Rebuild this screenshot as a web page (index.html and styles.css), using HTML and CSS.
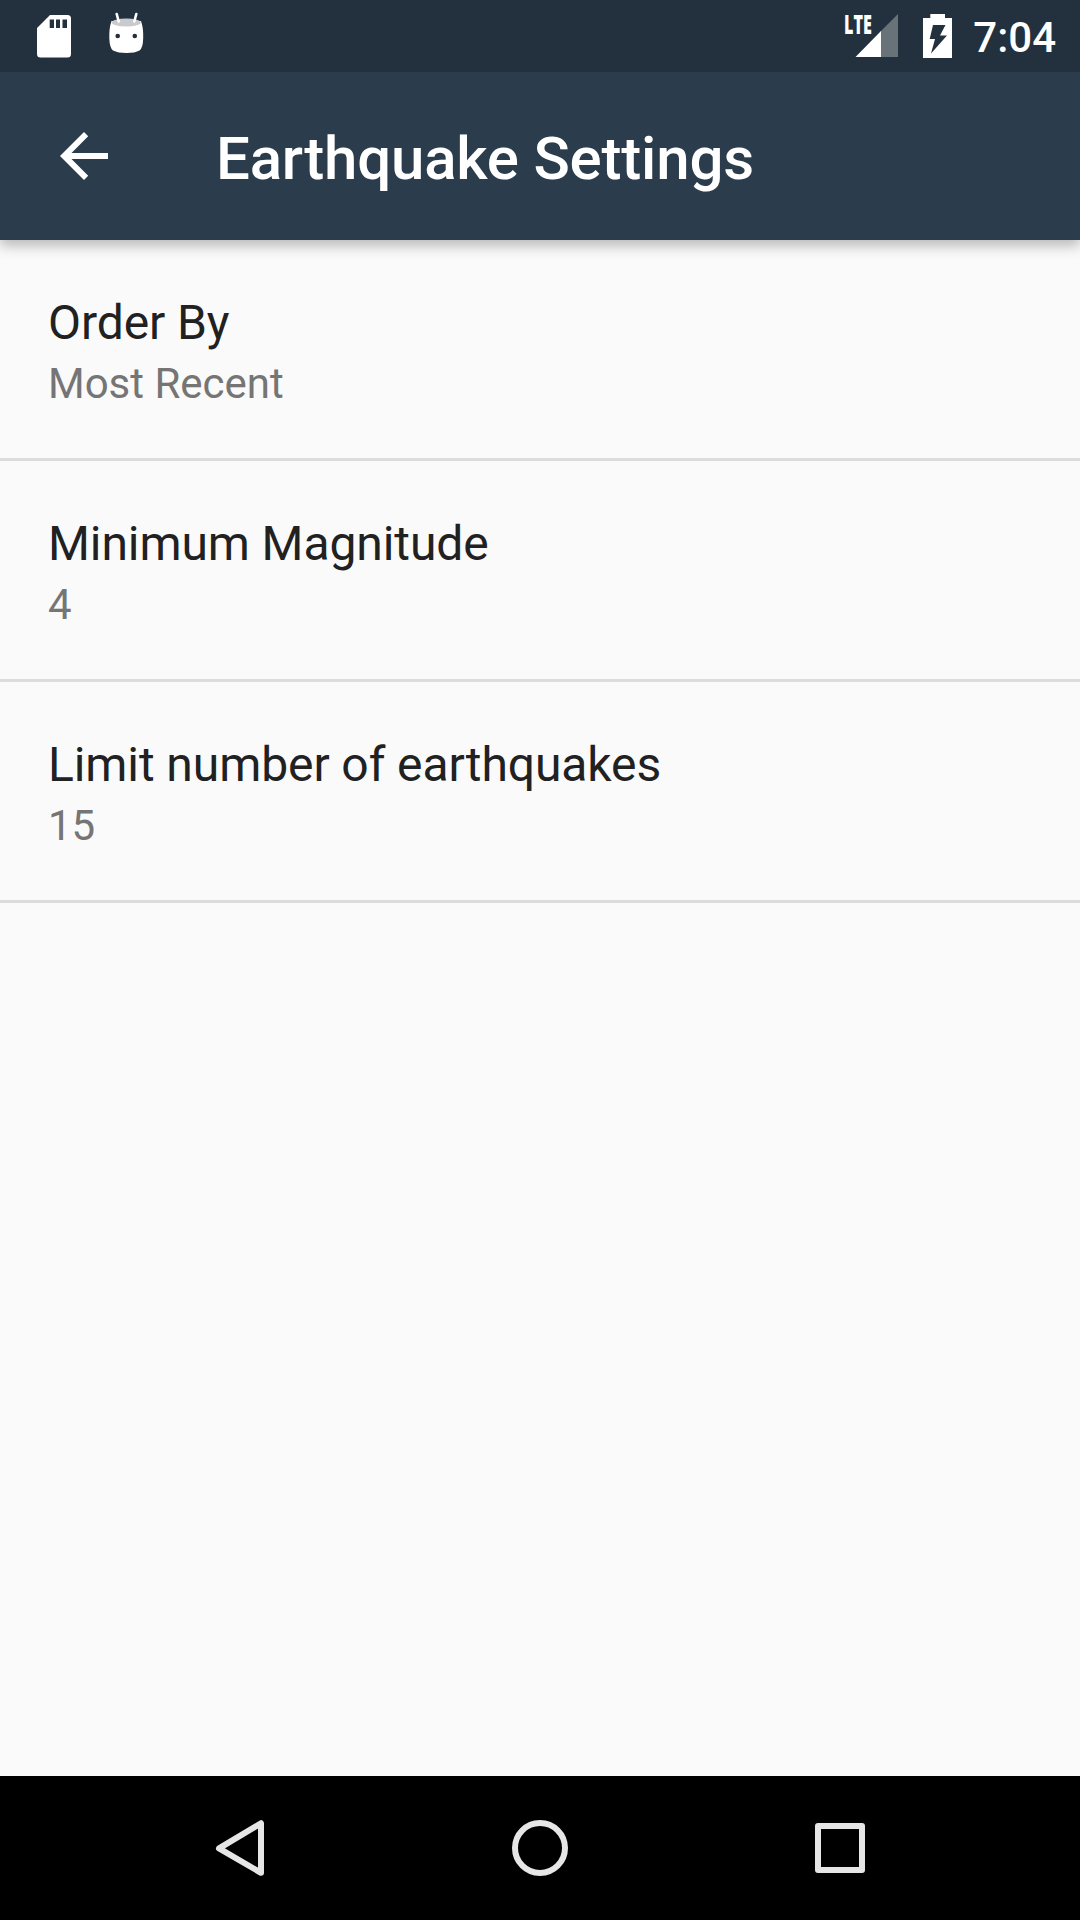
FILE: index.html
```html
<!DOCTYPE html>
<html lang="en">
<head>
<meta charset="utf-8">
<title>Earthquake Settings</title>
<link rel="stylesheet" href="styles.css">
</head>
<body>
<div class="screen">
  <div class="status-bar">
    <div class="notifications">
      <svg class="sd-card" width="34" height="43" viewBox="0 0 34 43" aria-hidden="true">
        <path fill="#fff" fill-rule="evenodd" d="M13 0H30.5Q34 0 34 3.5V39Q34 42.500 30.500 42.500H3.500Q0 42.500 0 39V13ZM12.700 4.500V13H17V4.500ZM19 4.500V13H23V4.500ZM25.500 4.500V13H30V4.500Z"/>
      </svg>
      <svg class="droid" width="36" height="42" viewBox="0 0 36 42" aria-hidden="true">
        <path fill="#fff" d="M2.500 9Q0 16 .300 26Q.600 36 4 38.500Q9 41 17.500 41Q26 41 30.500 38.500Q34 36 34.200 26Q34.500 16 32 9Z"/>
        <ellipse cx="17.300" cy="10.500" rx="14.600" ry="4" fill="#c8cacd"/>
        <path d="M7.700 2L9.700 9.500M27.300 2L25.300 9.500" stroke="#fff" stroke-width="2.600" stroke-linecap="round"/>
        <circle cx="8.700" cy="24" r="2.300" fill="#23303d"/>
        <circle cx="25.800" cy="24" r="2.300" fill="#23303d"/>
      </svg>
    </div>
    <div class="system-icons">
      <div class="signal">
        <svg width="54" height="44" viewBox="0 0 54 44" aria-hidden="true">
          <path fill="#687279" d="M53 0V43H35.500V17.500Z"/>
          <path fill="#fff" d="M36 17V43H10.500Z"/>
        </svg>
        <span class="network">LTE</span>
      </div>
      <svg class="battery" width="29" height="44" viewBox="0 0 29 44" aria-hidden="true">
        <path fill="#fff" fill-rule="evenodd" d="M7.300 0H22V4H29V44H0V4H7.300ZM10 11L6.700 25H12L8 39.500L24 21.500H17L22.500 11Z"/>
      </svg>
      <span class="clock">7:04</span>
    </div>
  </div>
  <header class="toolbar">
    <svg class="back" width="48" height="48" viewBox="0 0 48 48" aria-hidden="true">
      <path fill="#fff" d="M48 21H11.500L28.200 4.200L24 0L0 24L24 48L28.200 43.800L11.500 27H48Z"/>
    </svg>
    <h1 class="title">Earthquake Settings</h1>
  </header>
  <main class="preferences">
    <div class="preference">
      <div class="label">Order By</div>
      <div class="value">Most Recent</div>
    </div>
    <div class="preference">
      <div class="label">Minimum Magnitude</div>
      <div class="value">4</div>
    </div>
    <div class="preference">
      <div class="label">Limit number of earthquakes</div>
      <div class="value">15</div>
    </div>
  </main>
  <nav class="nav-bar">
    <svg width="60" height="60" viewBox="0 0 60 60" fill="none" stroke="#e6e6e6" stroke-width="6" stroke-linejoin="round" aria-hidden="true">
      <path d="M51 5.200V54.800L9 30.400Z"/>
    </svg>
    <svg width="60" height="60" viewBox="0 0 60 60" fill="none" stroke="#e6e6e6" stroke-width="6" aria-hidden="true">
      <circle cx="30" cy="30" r="25"/>
    </svg>
    <svg width="60" height="60" viewBox="0 0 60 60" fill="none" stroke="#e6e6e6" stroke-width="6" stroke-linejoin="round" aria-hidden="true">
      <path d="M8 8H52V52H8Z"/>
    </svg>
  </nav>
</div>
</body>
</html>
```
FILE: styles.css
```css
body {
  margin: 0;
  font-family: Roboto, sans-serif;
}

svg {
  display: block;
  flex: none;
}

.screen {
  display: flex;
  flex-direction: column;
  width: 1080px;
  height: 1920px;
  overflow: hidden;
  background: #fafafa;
}

.status-bar {
  display: flex;
  justify-content: space-between;
  z-index: 2;
  height: 72px;
  background: #23303d;
  color: #fff;
}

.notifications {
  display: flex;
  gap: 38px;
  padding-left: 37px;
}

.sd-card {
  margin-top: 14.500px;
}

.droid {
  margin-top: 12px;
}

.system-icons {
  display: flex;
  padding-right: 24px;
}

.signal {
  position: relative;
  margin-top: 14px;
  margin-right: 24px;
}

.network {
  position: absolute;
  top: -2px;
  left: -1px;
  font-family: "Open Sans", sans-serif;
  font-size: 26px;
  font-weight: 800;
  line-height: 24px;
  transform: scaleX(0.62);
  transform-origin: left;
}

.battery {
  margin-top: 14px;
  margin-right: 21px;
}

.clock {
  padding-top: 13px;
  font-size: 42px;
  font-weight: 500;
  line-height: 50px;
}

.toolbar {
  display: flex;
  align-items: center;
  z-index: 1;
  height: 168px;
  padding-left: 60px;
  background: #2b3c4c;
  color: #fff;
  box-shadow: 0 6px 12px rgba(0, 0, 0, 0.26);
}

.title {
  margin: 6px 0 0 108px;
  font-size: 60px;
  font-weight: 500;
  line-height: 72px;
  letter-spacing: -0.2px;
}

.preferences {
  flex: 1;
}

.preference {
  height: 163px;
  padding: 55px 48px 0;
  border-bottom: 3px solid #dcdcdc;
}

.label {
  color: #212121;
  font-size: 48px;
  line-height: 56px;
  letter-spacing: -0.09px;
}

.value {
  margin-top: 5px;
  color: #757575;
  font-size: 42px;
  line-height: 56px;
}

.nav-bar {
  display: flex;
  align-items: center;
  justify-content: center;
  gap: 240px;
  height: 144px;
  background: #000;
}
```
